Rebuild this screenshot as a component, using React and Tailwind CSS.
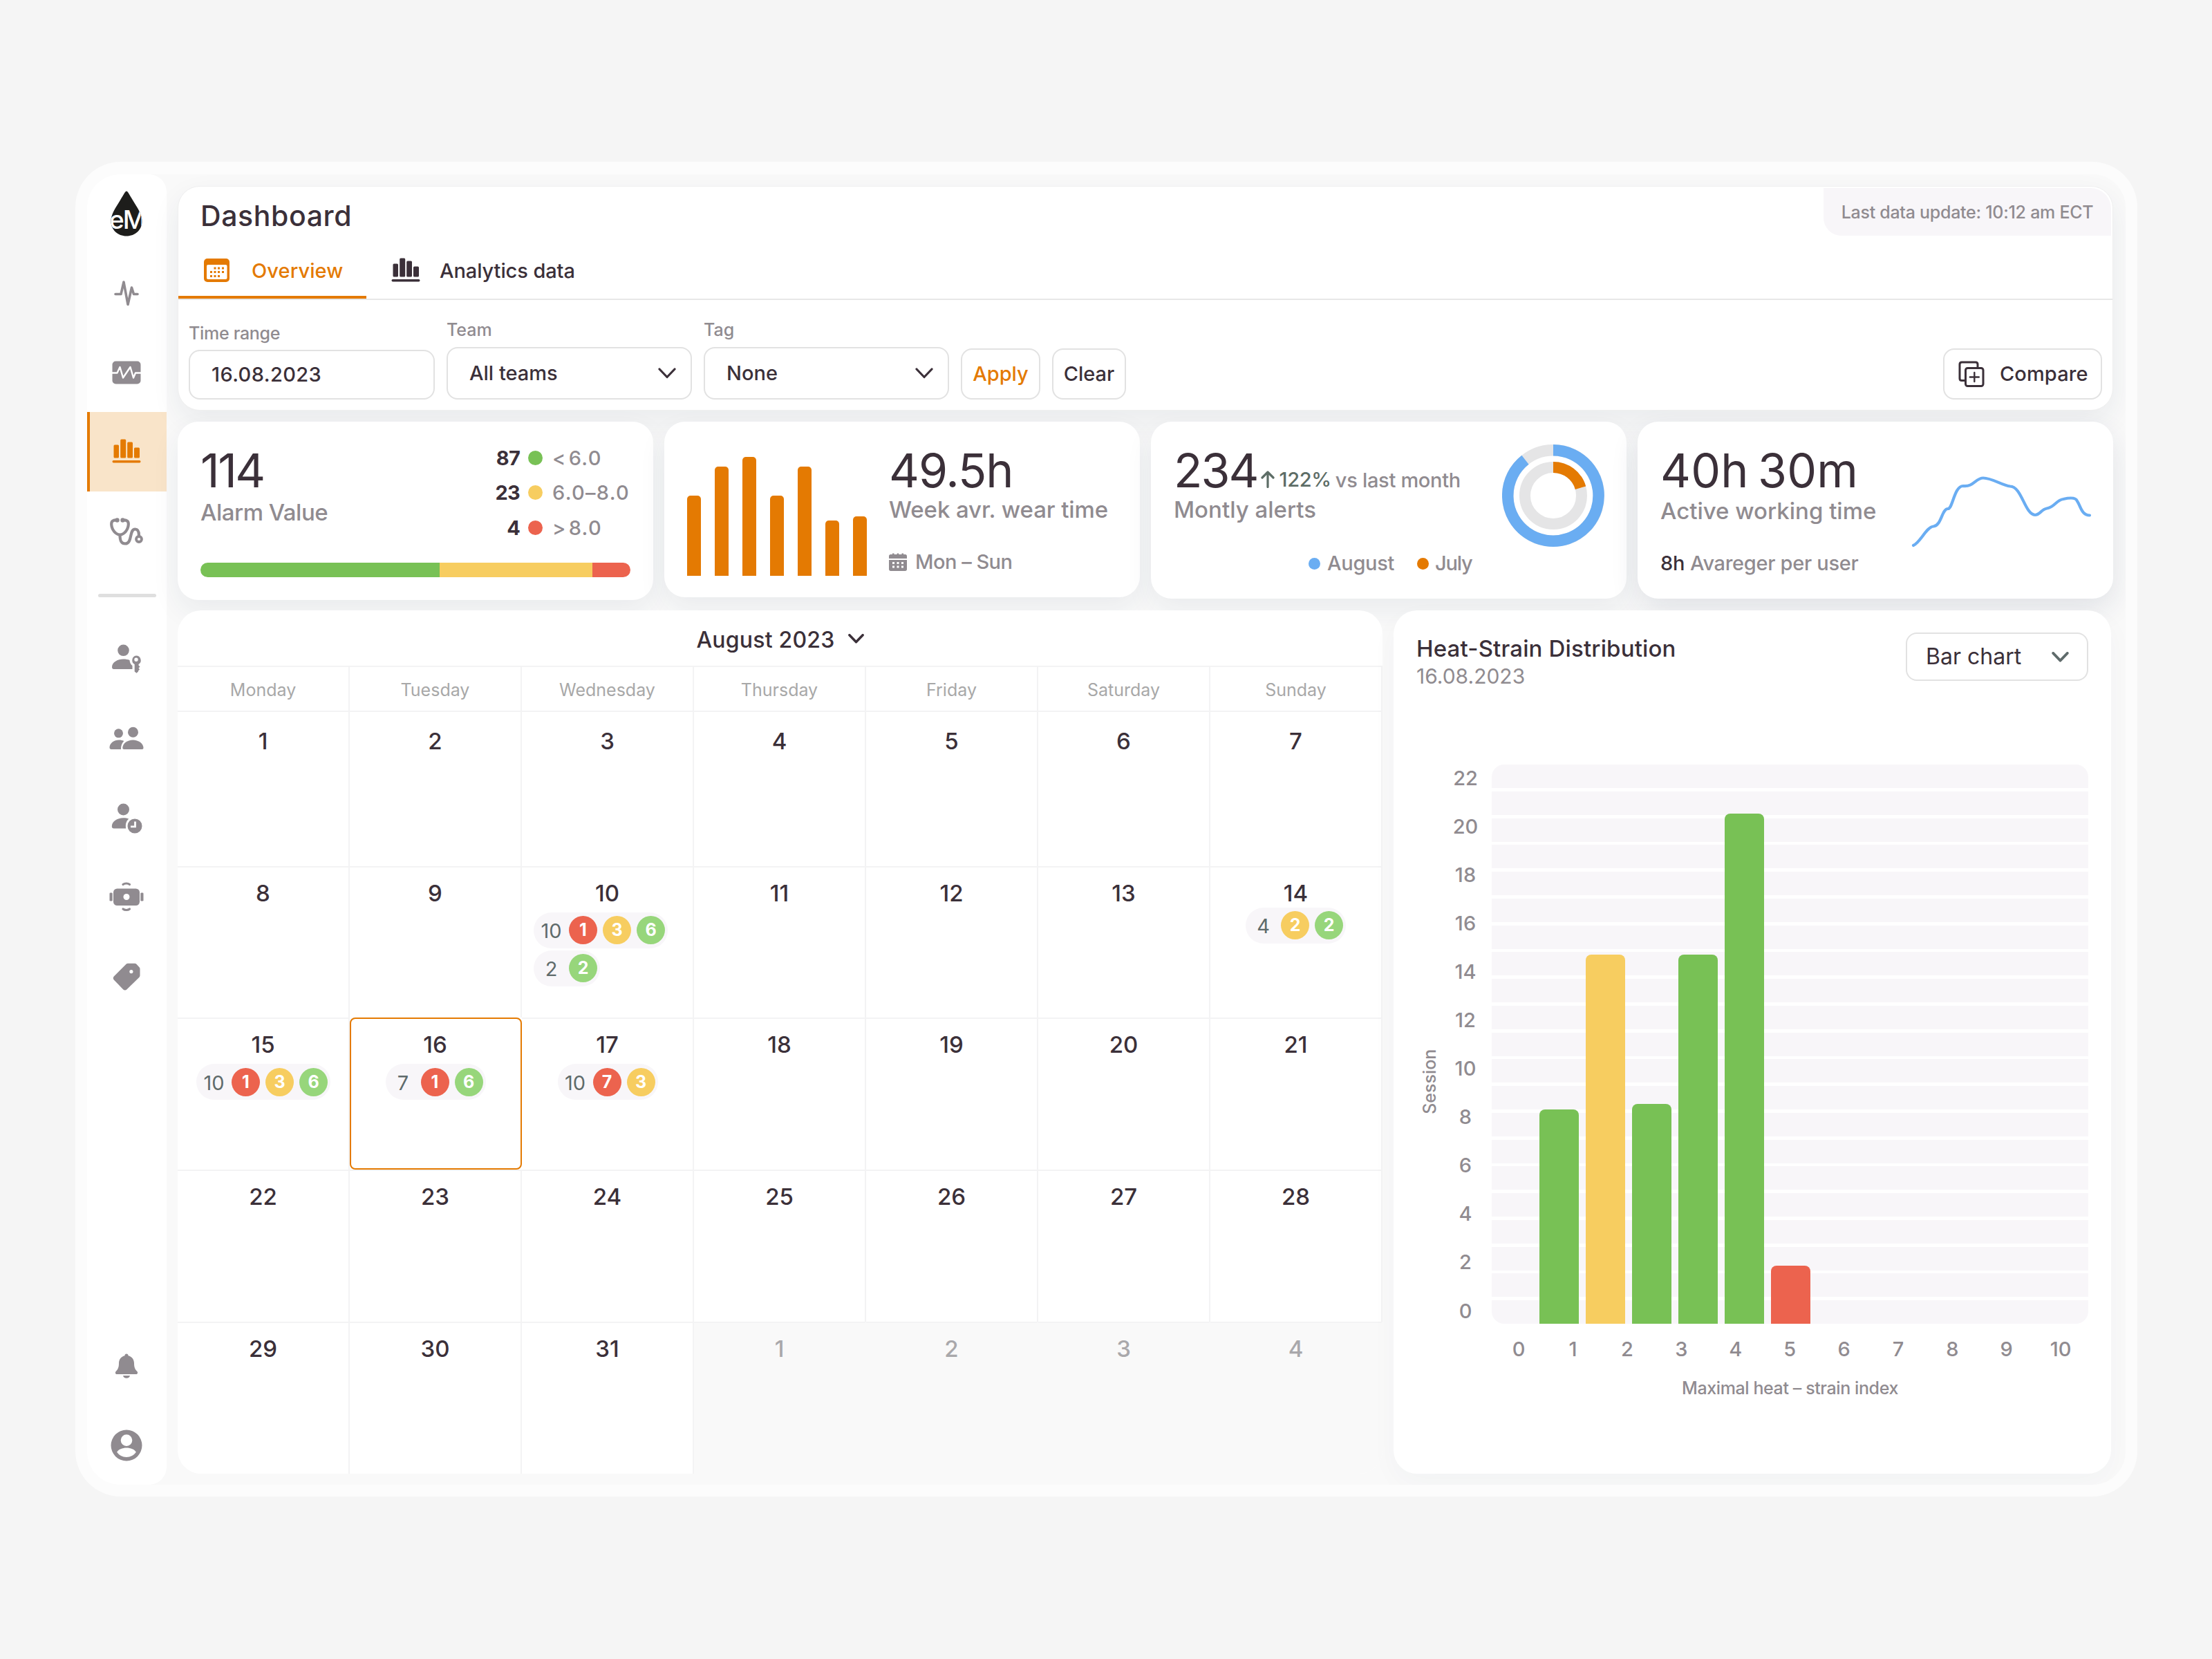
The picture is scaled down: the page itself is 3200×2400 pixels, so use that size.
import { useState } from "react";

const WEEKDAYS = [
  "Monday",
  "Tuesday",
  "Wednesday",
  "Thursday",
  "Friday",
  "Saturday",
  "Sunday",
];

const EVENTS = {
  10: {
    align: "left",
    rows: [
      { total: 10, red: 1, yellow: 3, green: 6 },
      { total: 2, green: 2 },
    ],
  },
  14: { align: "high", rows: [{ total: 4, yellow: 2, green: 2 }] },
  15: { rows: [{ total: 10, red: 1, yellow: 3, green: 6 }] },
  16: { rows: [{ total: 7, red: 1, green: 6 }] },
  17: { rows: [{ total: 10, red: 7, yellow: 3 }] },
};

const DAYS = Array.from({ length: 35 }, (_, i) => ({
  label: i < 31 ? i + 1 : i - 30,
  outside: i >= 31,
}));

const WEEK_BARS = [116, 158, 172, 116, 158, 80, 86];

const CHART_BARS = [
  { height: 310, color: "bg-[#78c155]" },
  { height: 534, color: "bg-[#f7cd60]" },
  { height: 318, color: "bg-[#78c155]" },
  { height: 534, color: "bg-[#78c155]" },
  { height: 738, color: "bg-[#78c155]" },
  { height: 84, color: "bg-[#ec634e]" },
];

function Chevron({ className, strokeWidth = 3.2 }) {
  return (
    <svg viewBox="0 0 26 16" fill="none" className={className}>
      <path
        d="M2 2 13 13.5 24 2"
        stroke="currentColor"
        strokeWidth={strokeWidth}
        strokeLinecap="round"
        strokeLinejoin="round"
      />
    </svg>
  );
}

function BarsIcon({ className }) {
  return (
    <svg viewBox="0 0 42 35" fill="currentColor" className={className}>
      <rect x="2.5" y="8.5" width="7.5" height="19" rx="1.5" />
      <rect x="12.2" y="0.5" width="8" height="27" rx="1.5" />
      <rect x="22.2" y="4.5" width="7.8" height="23" rx="1.5" />
      <rect x="32" y="12.5" width="8" height="15" rx="1.5" />
      <rect x="0.5" y="31" width="41" height="3.4" rx="1.7" />
    </svg>
  );
}

function Logo() {
  return (
    <svg viewBox="0 0 46 66" className="h-[66px] w-[46px]">
      <defs>
        <clipPath id="drop">
          <path d="M23 .5C24.500.5 27 5 32 13.500C39 25 45.500 34 45.500 44C45.500 56.500 35.500 65.500 23 65.500S.5 56.500.5 44C.5 34 7 25 14 13.500C19 5 21.500.5 23 .5Z" />
        </clipPath>
      </defs>
      <g clipPath="url(#drop)">
        <rect width="46" height="66" fill="#1d1d1b" />
        <text
          x="-2"
          y="55"
          fontFamily="Inter, sans-serif"
          fontSize="37"
          fontWeight="500"
          letterSpacing="-2"
          fill="#fff"
        >
          eM
        </text>
      </g>
    </svg>
  );
}

function PulseIcon() {
  return (
    <svg viewBox="0 0 36 38" fill="none" className="h-[38px] w-9">
      <path
        d="M2 20.500h8L14 3l6 32.500L25.500 11l3 9.500H34"
        stroke="currentColor"
        strokeWidth="3.6"
        strokeLinecap="round"
        strokeLinejoin="round"
      />
    </svg>
  );
}

function MonitorIcon() {
  return (
    <svg viewBox="0 0 42 34" className="h-[34px] w-[42px]">
      <rect x=".5" y=".5" width="41" height="33" rx="5" fill="currentColor" />
      <path
        d="M0 17.500h7.500L11.500 9l4.500 15.500L26.500 9 31 24.500l3-7h8"
        fill="none"
        stroke="#fff"
        strokeWidth="2.400"
        strokeLinejoin="round"
      />
    </svg>
  );
}

function StethoscopeIcon() {
  return (
    <svg viewBox="0 0 48 40" fill="none" className="h-10 w-12">
      <g stroke="currentColor" strokeWidth="4.200" strokeLinecap="round">
        <path d="M10.500 3.500C5 3.200 2 4.500 2.200 9.500 2.500 17 8 24.500 14.500 24.500S26.500 17 26.800 9.500C27 4.500 24 3.200 18.500 3.500" />
        <path d="M14.500 25c0 8 1.500 12.500 7.500 12.500 11 0 5.500-21 14.500-21 4.500 0 5.500 4 5.500 9" />
        <circle cx="42" cy="31" r="4" strokeWidth="3.800" />
      </g>
      <circle cx="10.500" cy="3.500" r="3.200" fill="currentColor" />
      <circle cx="18.500" cy="3.500" r="3.200" fill="currentColor" />
    </svg>
  );
}

function UserKeyIcon() {
  return (
    <svg viewBox="0 0 44 42" fill="currentColor" className="h-[42px] w-11">
      <circle cx="17.500" cy="8.800" r="8.300" />
      <path d="M1 33c0-7 8-11.500 16.500-11.500 3.500 0 6.500.5 9 1.500.3 3.500 1.500 6 4 8v5H3.500C2 36 1 35 1 33Z" />
      <path
        fillRule="evenodd"
        d="M36 16.500a6.700 6.700 0 0 1 3.500 12.400v1.600l2 2-2 2 1.500 2-2 2v1l-2.500 2.300-2.800-2.300V29a6.700 6.700 0 0 1 2.300-12.500Zm0 3a2.700 2.700 0 1 0 0 5.400 2.700 2.700 0 0 0 0-5.400Z"
      />
    </svg>
  );
}

function UsersIcon() {
  return (
    <svg viewBox="0 0 50 34" fill="currentColor" className="h-[34px] w-[50px]">
      <circle cx="13.500" cy="9.800" r="6.500" />
      <circle cx="34.500" cy="8.300" r="7.500" />
      <path d="M.5 30.500C.5 24 7 19.500 14 19.500c3 0 5.500.5 7.300 1.500-3 3-4.500 7-4.300 12H3C1.500 33 .5 32 .5 30.500Z" />
      <path d="M19.300 31c0-6.500 7-11.500 15-11.500s15.200 5 15.200 11.500c0 1.200-.8 2-2 2H21.300c-1.200 0-2-.8-2-2Z" />
    </svg>
  );
}

function UserClockIcon() {
  return (
    <svg viewBox="0 0 45 44" fill="none" className="mt-[2px] h-11 w-[45px]">
      <circle cx="17.500" cy="9" r="8.500" fill="currentColor" />
      <path
        d="M.8 33.500c0-7 7.700-12.200 16.700-12.200 3 0 5.500.4 7.700 1.300-3.700 3.600-5 8-4 13.900H3.800c-2 0-3-1.200-3-3Z"
        fill="currentColor"
      />
      <circle cx="34" cy="33" r="10.500" fill="currentColor" />
      <path d="M34.500 26.500v7.300H28" stroke="#fff" strokeWidth="2.800" />
    </svg>
  );
}

function HeadsetIcon() {
  return (
    <svg viewBox="0 0 50 43" fill="none" className="h-[43px] w-[50px]">
      <rect x="6" y="9.500" width="38" height="24.500" rx="5.500" fill="currentColor" />
      <circle cx="25" cy="21.500" r="4.500" fill="#fff" />
      <rect x=".5" y="15.500" width="4.200" height="12" rx="1.200" fill="currentColor" />
      <rect x="45.300" y="15.500" width="4.200" height="12" rx="1.200" fill="currentColor" />
      <path
        d="M20 3.500c2.500-2 7-2 9.500 0M20 39c2.500 2 7 2 9.500 0"
        stroke="currentColor"
        strokeWidth="3.200"
        strokeLinecap="round"
      />
    </svg>
  );
}

function TagIcon() {
  return (
    <svg viewBox="0 0 40 40" fill="currentColor" className="size-10">
      <path
        fillRule="evenodd"
        d="M22 .8h10c1 0 1.700.3 2.400 1l4.100 4.500c.7.700 1 1.400 1 2.400v9.600c0 1-.3 1.800-1 2.500L20.300 38.500c-1.500 1.400-3.500 1.400-5 0L1.800 24.500c-1.400-1.500-1.400-3.500 0-5L19.500 1.800c.7-.7 1.500-1 2.500-1Zm4.900 9.200a2.600 2.600 0 1 0 0 5.200 2.600 2.600 0 0 0 0-5.200Z"
      />
    </svg>
  );
}

function BellIcon() {
  return (
    <svg viewBox="0 0 34 36" fill="currentColor" className="h-9 w-[34px]">
      <path d="M17 .5c1.600 0 2.600 1.200 2.600 2.700C24.700 4.400 28 8.500 28 14c0 6.500 1.500 9 4.200 11.700 1.800 1.900.8 4.300-1.400 4.300H3.200C1 30 0 27.600 1.800 25.700 4.500 23 6 20.500 6 14 6 8.500 9.300 4.400 14.400 3.200 14.400 1.700 15.400.5 17 .5Z" />
      <path d="M12 32h10c-.4 2.300-2.300 3.700-5 3.700S12.400 34.300 12 32Z" />
    </svg>
  );
}

function AvatarIcon() {
  return (
    <svg viewBox="0 0 46 46" fill="currentColor" className="size-[46px]">
      <path
        fillRule="evenodd"
        d="M23 .5a22.500 22.500 0 1 0 0 45 22.500 22.500 0 0 0 0-45Zm0 6.800a8.300 8.300 0 1 1 0 16.600 8.300 8.300 0 0 1 0-16.600Zm0 32.700c-5.800 0-10.800-2.800-13.800-7.200 1.500-4 8-6.300 13.800-6.300s12.300 2.300 13.800 6.300C33.800 37.200 28.800 40 23 40Z"
      />
    </svg>
  );
}

function SidebarItem({ active, children }) {
  return (
    <button
      className={
        active
          ? "flex h-[115px] w-full items-center justify-center border-l-4 border-[#e47a02] bg-[#f9e4c9] pr-[5px] pb-[2px] text-[#e47a02]"
          : "flex h-[115px] w-full items-center justify-center pr-px text-[#908b90]"
      }
    >
      {children}
    </button>
  );
}

function Sidebar() {
  return (
    <nav className="flex h-full w-[115px] shrink-0 flex-col items-center rounded-[26px] bg-white">
      <div className="flex h-[114px] items-center pr-px">
        <Logo />
      </div>
      <SidebarItem>
        <PulseIcon />
      </SidebarItem>
      <SidebarItem>
        <MonitorIcon />
      </SidebarItem>
      <SidebarItem active>
        <BarsIcon className="h-[35px] w-[42px]" />
      </SidebarItem>
      <SidebarItem>
        <StethoscopeIcon />
      </SidebarItem>
      <div className="mt-[33px] mb-[31px] h-[5px] w-[84px] rounded-full bg-[#dfdfdf]" />
      <SidebarItem>
        <UserKeyIcon />
      </SidebarItem>
      <SidebarItem>
        <UsersIcon />
      </SidebarItem>
      <SidebarItem>
        <UserClockIcon />
      </SidebarItem>
      <SidebarItem>
        <HeadsetIcon />
      </SidebarItem>
      <SidebarItem>
        <TagIcon />
      </SidebarItem>
      <div className="mt-auto w-full">
        <SidebarItem>
          <BellIcon />
        </SidebarItem>
        <SidebarItem>
          <AvatarIcon />
        </SidebarItem>
      </div>
    </nav>
  );
}

function Header() {
  return (
    <header className="flex h-[325px] w-[2800px] flex-col rounded-[32px] border border-[#efefef] bg-white shadow-[0_16px_40px_rgba(30,50,80,0.07)]">
      <div className="flex h-[164px] shrink-0 justify-between border-b-2 border-[#e7e7e7]">
        <div className="flex flex-col">
          <h1 className="mt-[17px] ml-[32px] text-[41px] leading-[50px] font-medium tracking-[0.6px]">
            Dashboard
          </h1>
          <div className="mt-[17px] flex h-[80px]">
            <button className="flex w-[272px] items-center border-b-4 border-[#e47a02] pt-[2px] pl-[37px] text-[29px] font-medium text-[#e47a02]">
              <svg viewBox="0 0 38 34" className="mt-[-3px] h-[34px] w-[38px]">
                <rect width="37" height="34" rx="5" fill="currentColor" />
                <rect x="4" y="9" width="29.500" height="21" rx="2" fill="#fff" />
                <g fill="currentColor">
                  <path d="M14.500 12.500h3v3h-3zM20 12.500h3v3h-3zM26 12.500h3v3h-3z" />
                  <path d="M9 18h3v3H9zM14.500 18h3v3h-3zM20 18h3v3h-3zM26 18h3v3h-3z" />
                  <path d="M9 24h3v3H9zM14.500 24h3v3h-3zM20 24h3v3h-3z" />
                </g>
              </svg>
              <span className="ml-[31px] tracking-[0.1px]">Overview</span>
            </button>
            <button className="flex items-center border-b-4 border-transparent pt-[2px] pl-[36px] text-[29px] font-medium">
              <BarsIcon className="mt-[-4px] h-[35px] w-[42px]" />
              <span className="ml-[28px] tracking-[-0.1px]">
                Analytics data
              </span>
            </button>
          </div>
        </div>
        <div className="mt-[2px] mr-[2px] flex h-[69px] w-[416px] items-center justify-center rounded-tr-[30px] rounded-bl-[26px] bg-[#f8f6f9] pt-[2px] text-[25px] font-medium tracking-[-0.27px] text-[#908b90]">
          Last data update: 10:12 am ECT
        </div>
      </div>

      <div className="flex grow items-end gap-[17px] px-[15px] pb-[15px]">
        <label className="w-[356px] text-[25px] font-medium text-[#908b90]">
          <span className="block leading-[30px] tracking-[-0.3px]">
            Time range
          </span>
          <span className="mt-[9px] flex h-[72px] items-center rounded-2xl border-2 border-[#e2e2e2] px-[31px] text-[29px] tracking-[0.4px] text-[#3b3039]">
            16.08.2023
          </span>
        </label>
        <FilterSelect label="Team" value="All teams" />
        <FilterSelect label="Tag" value="None" />
        <button className="h-[74px] w-[115px] rounded-2xl border-2 border-[#e2e2e2] text-[29px] font-medium text-[#e47a02]">
          Apply
        </button>
        <button className="h-[74px] w-[107px] rounded-2xl border-2 border-[#e2e2e2] text-[29px] font-medium">
          Clear
        </button>
        <button className="ml-auto flex h-[74px] w-[230px] items-center rounded-2xl border-2 border-[#e2e2e2] pl-5 text-[29px] font-medium">
          <svg viewBox="0 0 38 38" fill="none" className="size-[38px]">
            <g
              stroke="currentColor"
              strokeWidth="3"
              strokeLinecap="round"
              strokeLinejoin="round"
            >
              <rect x="10.500" y="10.500" width="25.500" height="26" rx="3" />
              <path d="M28 9.500V5c0-2-1-3-3-3H5C3 2 2 3 2 5v20.500c0 2 1 3 3 3h4.500" />
              <path d="M23.300 17v13M16.800 23.500h13" strokeWidth="2.400" />
            </g>
          </svg>
          <span className="ml-[22px] tracking-[0.1px]">Compare</span>
        </button>
      </div>
    </header>
  );
}

function FilterSelect({ label, value }) {
  return (
    <label className="w-[355px] text-[25px] font-medium text-[#908b90]">
      <span className="block leading-[30px]">{label}</span>
      <span className="mt-[10px] flex h-[76px] items-center justify-between rounded-2xl border-2 border-[#e2e2e2] pr-[21px] pl-[31px] text-[29px] text-[#3b3039]">
        {value}
        <Chevron className="h-4 w-[26px]" />
      </span>
    </label>
  );
}

function LegendRow({ count, color, range }) {
  return (
    <div className="flex h-[50.500px] items-center text-[29px]">
      <span className="w-[50px] text-right font-bold tracking-[-0.8px]">
        {count}
      </span>
      <span className={`ml-3 size-[21px] rounded-full ${color}`} />
      <span className="ml-[14px] w-[113px] font-medium tracking-[1.3px] whitespace-nowrap text-[#908b90] [word-spacing:-6px]">
        {range}
      </span>
    </div>
  );
}

function AlarmCard() {
  return (
    <section className="h-[258px] w-[688px] rounded-[30px] bg-white px-[33px] pt-[27px] shadow-[0_16px_40px_rgba(30,50,80,0.07)]">
      <div className="flex justify-between">
        <div className="pt-[13px]">
          <div className="text-[68px] leading-[60px] tracking-[-2.5px]">114</div>
          <div className="mt-[9px] text-[33px] leading-[44px] font-medium tracking-[-0.5px] text-[#908b90]">
            Alarm Value
          </div>
        </div>
        <div>
          <LegendRow count={87} color="bg-[#78c155]" range="< 6.0" />
          <LegendRow count={23} color="bg-[#f7cd60]" range="6.0–8.0" />
          <LegendRow count={4} color="bg-[#ec634e]" range="> 8.0" />
        </div>
      </div>
      <div className="mt-[25.500px] flex h-[21px] overflow-hidden rounded-full">
        <div className="w-[346px] bg-[#78c155]" />
        <div className="w-[221px] bg-[#f7cd60]" />
        <div className="grow bg-[#ec634e]" />
      </div>
    </section>
  );
}

function WearTimeCard() {
  return (
    <section className="flex h-[254px] w-[688px] rounded-[30px] bg-white pl-[33px] shadow-[0_16px_40px_rgba(30,50,80,0.07)]">
      <div className="flex h-[223px] items-end gap-5">
        {WEEK_BARS.map((height, i) => (
          <div
            key={i}
            className="w-5 rounded-t-[5px] bg-[#e47a02]"
            style={{ height }}
          />
        ))}
      </div>
      <div className="ml-[32px] pt-[40px]">
        <div className="text-[68px] leading-[60px] tracking-[-1px]">49.5h</div>
        <div className="mt-[5px] text-[33px] leading-[44px] font-medium tracking-[-0.1px] whitespace-nowrap text-[#908b90]">
          Week avr. wear time
        </div>
        <div className="mt-[34px] flex items-center text-[29px] leading-[40px] font-medium text-[#908b90]">
          <svg viewBox="0 0 26 26" className="size-[26px]">
            <path
              d="M0 4.500C0 3 1 2 2.500 2H5V.5h2.500V2h4.200V.5h2.500V2h4.300V.5H21V2h2.500C25 2 26 3 26 4.500V8H0ZM0 10h26v13.500c0 1.500-1 2.500-2.500 2.500h-21C1 26 0 25 0 23.500Z"
              fill="currentColor"
            />
            <path
              d="M5 13h3v3H5zM11.500 13h3v3h-3zM18 13h3v3h-3zM5 18.500h3v3H5zM11.500 18.500h3v3h-3zM18 18.500h3v3h-3z"
              fill="#fff"
            />
          </svg>
          <span className="ml-[12px] tracking-[-0.5px]">Mon – Sun</span>
        </div>
      </div>
    </section>
  );
}

function AlertsCard() {
  return (
    <section className="flex h-[256px] w-[688px] justify-between rounded-[30px] bg-white pr-[32px] pl-[33px] shadow-[0_16px_40px_rgba(30,50,80,0.07)]">
      <div className="pt-[40px]">
        <div className="flex h-[60px] items-center">
          <span className="text-[68px] leading-[60px] tracking-[-2px]">
            234
          </span>
          <svg
            viewBox="0 0 20 25"
            fill="none"
            className="mt-[27px] ml-[5px] h-[25px] w-5"
          >
            <path
              d="M10 23.500V2M2 10l8-8 8 8"
              stroke="#5d6d66"
              strokeWidth="3.2"
              strokeLinecap="round"
              strokeLinejoin="round"
            />
          </svg>
          <span className="mt-[27px] ml-[6px] text-[29px] leading-[30px] font-medium tracking-[-0.3px] text-[#5d6d66]">
            122%
          </span>
          <span className="mt-[29px] ml-[6px] text-[29px] leading-[30px] font-medium tracking-[-0.3px] text-[#908b90]">
            vs last month
          </span>
        </div>
        <div className="mt-[5px] text-[33px] leading-[44px] font-medium text-[#908b90]">
          Montly alerts
        </div>
        <div className="mt-[36px] ml-[195px] flex items-center text-[29px] leading-[40px] font-medium text-[#908b90]">
          <span className="mr-[10px] size-[17px] rounded-full bg-[#6aadf2]" />
          <span className="w-[97px] tracking-[-0.3px]">August</span>
          <span className="mr-[9px] ml-[33px] size-[17px] rounded-full bg-[#e47a02]" />
          <span className="tracking-[-1.2px]">July</span>
        </div>
      </div>
      <svg viewBox="0 0 148 148" fill="none" className="mt-[33px] size-[148px]">
        <circle cx="74" cy="74" r="65.700" stroke="#e5e5e6" strokeWidth="16.500" />
        <circle cx="74" cy="74" r="41" stroke="#e5e5e6" strokeWidth="16" />
        <path
          d="M74 8.300A65.700 65.700 0 1 1 33.500 22.200"
          stroke="#6aadf2"
          strokeWidth="16.500"
        />
        <path
          d="M74 33A41 41 0 0 1 113.500 62.700"
          stroke="#e47a02"
          strokeWidth="16"
        />
      </svg>
    </section>
  );
}

function WorkingTimeCard() {
  return (
    <section className="flex h-[256px] w-[688px] rounded-[30px] bg-white pl-[33px] shadow-[0_16px_40px_rgba(30,50,80,0.11)]">
      <div className="w-[363px] pt-[40px]">
        <div className="text-[68px] leading-[60px] tracking-[0.2px] whitespace-nowrap [word-spacing:-6px]">
          40h 30m
        </div>
        <div className="mt-[7px] text-[33px] leading-[44px] font-medium whitespace-nowrap text-[#908b90]">
          Active working time
        </div>
        <div className="mt-[34px] text-[29px] leading-[40px] font-medium tracking-[-0.3px] text-[#908b90]">
          <span className="mr-[8px] text-[#3b3039]">8h</span>
          Avareger per user
        </div>
      </div>
      <svg
        viewBox="0 0 262 104"
        fill="none"
        className="mt-[78px] h-[104px] w-[262px]"
      >
        <path
          d="M3 101C13 97 22 74 32 73.500C44 72 44 48 53 48C60 48 62 15 75 15C90 17 93 3.500 104 3.500C117 3.500 131 14 143 15.500C160 16 164 56 179 57C186 57 188 49 196 47.500C207 46 210 35 220 34C229 32 238 31 240 37C245 44 246 57 258 57.500"
          stroke="#6aadf2"
          strokeWidth="4.200"
          strokeLinecap="round"
        />
      </svg>
    </section>
  );
}

function Dot({ value, color }) {
  if (!value) return null;
  return (
    <span
      className={`flex size-[41px] items-center justify-center rounded-full text-[25px] font-bold text-white ${color}`}
    >
      {value}
    </span>
  );
}

function EventPill({ total, red, yellow, green }) {
  return (
    <div className="flex h-[52px] items-center gap-2 rounded-full bg-[#f8f6f9] pr-1">
      <span className="-mr-2 w-[51px] pt-[2px] text-center text-[29px] text-[#5f6b6b]">
        {total}
      </span>
      <Dot value={red} color="bg-[#ec634e]" />
      <Dot value={yellow} color="bg-[#f7cd60]" />
      <Dot value={green} color="bg-[#97d67b]" />
    </div>
  );
}

function DayCell({ day, index, selected, onSelect }) {
  const events = day.outside ? null : EVENTS[day.label];
  const firstRow = index < 7;
  let pillWrap = "mt-[8px] flex flex-col items-center gap-[3px] pl-px";
  if (events?.align === "left") {
    pillWrap = "mt-[8px] flex flex-col items-start gap-[3px] pl-[17px]";
  } else if (events?.align === "high") {
    pillWrap = "mt-px flex flex-col items-center gap-[3px]";
  }

  return (
    <div
      onClick={onSelect}
      className={`border-t-2 border-r-2 ${
        firstRow ? "pt-[22px]" : "pt-[17px]"
      } ${
        day.outside
          ? "border-t-[#f3f3f4] border-r-[#f9f9f9] bg-[#f9f9f9] text-[#a9a8ab]"
          : "border-[#f3f3f4]"
      } ${
        selected ? "rounded-lg outline-2 -outline-offset-2 outline-[#e47a02]" : ""
      }`}
    >
      <div className="text-center text-[33px] leading-[40px] font-medium">
        {day.label}
      </div>
      {events && (
        <div className={pillWrap}>
          {events.rows.map((row, i) => (
            <EventPill key={i} {...row} />
          ))}
        </div>
      )}
    </div>
  );
}

function Calendar() {
  const [selected, setSelected] = useState(15);

  return (
    <section className="flex h-[1249px] w-[1743px] flex-col overflow-hidden rounded-[34px] bg-white">
      <div className="flex h-[80px] items-center justify-center gap-[19px] pt-[5px] text-[32px] font-medium tracking-[0.2px]">
        August 2023
        <Chevron className="mt-[-4px] h-[14px] w-[23px]" strokeWidth={4} />
      </div>
      <div className="grid h-[65px] grid-cols-7 border-t-2 border-[#f3f3f4]">
        {WEEKDAYS.map((name) => (
          <div
            key={name}
            className="flex items-center justify-center border-r-2 border-[#f3f3f4] pt-[4px] text-[25px] text-[#a8a8a8]"
          >
            {name}
          </div>
        ))}
      </div>
      <div className="grid grow grid-cols-7 grid-rows-[224.500px_repeat(4,1fr)]">
        {DAYS.map((day, i) => (
          <DayCell
            key={i}
            day={day}
            index={i}
            selected={i === selected}
            onSelect={() => setSelected(i)}
          />
        ))}
      </div>
    </section>
  );
}

function HeatStrainCard() {
  return (
    <section className="h-[1249px] w-[1038px] rounded-[34px] bg-white pr-[33px] pl-[33px] shadow-[0_14px_40px_rgba(30,50,80,0.03)]">
      <div className="flex justify-between pt-[32px]">
        <div className="pt-[3px]">
          <h2 className="text-[33px] leading-[40px] font-medium tracking-[0.15px]">
            Heat-Strain Distribution
          </h2>
          <div className="text-[30px] leading-[40px] text-[#908b90]">
            16.08.2023
          </div>
        </div>
        <button className="flex h-[70px] w-[264px] items-center justify-between rounded-2xl border-2 border-[#e2e2e2] pr-[26px] pl-[27px] text-[32px]">
          Bar chart
          <Chevron className="h-[15px] w-[25px] text-[#5f6b6b]" strokeWidth={4} />
        </button>
      </div>

      <div className="mt-[108px] flex h-[809px]">
        <div className="flex w-10 items-center justify-center pt-[109px]">
          <span className="-rotate-90 text-[25px] font-medium whitespace-nowrap text-[#908b90]">
            Session
          </span>
        </div>
        <div className="mt-[-15px] flex w-[62px] flex-col text-center text-[29px] font-medium text-[#908b90]">
          {Array.from({ length: 12 }, (_, i) => (
            <span key={i} className="h-[70.05px] shrink-0 leading-[70px]">
              {22 - i * 2}
            </span>
          ))}
        </div>
        <div className="ml-[7px] grid h-[809px] w-[863px]">
          <div className="col-start-1 row-start-1 flex flex-col gap-[4.600px] overflow-hidden rounded-[18px]">
            {Array.from({ length: 21 }, (_, i) => (
              <div key={i} className="flex-1 bg-[#f8f6f9]" />
            ))}
          </div>
          <div className="col-start-1 row-start-1 flex items-end gap-[10px] pl-[69px]">
            {CHART_BARS.map((bar, i) => (
              <div
                key={i}
                className={`w-[57px] rounded-t-lg ${bar.color}`}
                style={{ height: bar.height }}
              />
            ))}
          </div>
        </div>
      </div>

      <div className="mt-[17px] ml-[109px] flex px-0 text-center text-[29px] leading-[40px] font-medium text-[#908b90]">
        {Array.from({ length: 11 }, (_, i) => (
          <span key={i} className="w-[78.400px]">
            {i}
          </span>
        ))}
      </div>
      <div className="mt-[20px] ml-[109px] text-center text-[25px] leading-[32px] font-medium tracking-[-0.4px] text-[#908b90]">
        Maximal heat – strain index
      </div>
    </section>
  );
}

export default function App() {
  return (
    <div className="flex h-[2400px] w-[3200px] bg-[#f5f5f5] pt-[234px] pl-[109px] font-[Inter,sans-serif] text-[#3b3039]">
      <div className="h-[1931px] w-[2983px] rounded-[66px] bg-[#fcfcfc] p-[17px] pt-[18px]">
        <div className="flex h-[1896px] w-full overflow-hidden rounded-[48px] bg-[#f9f9f9]">
          <Sidebar />
          <main className="pt-[17px] pl-4">
            <Header />
            <div className="mt-[16px] flex h-[258px] items-start gap-4">
              <AlarmCard />
              <WearTimeCard />
              <AlertsCard />
              <WorkingTimeCard />
            </div>
            <div className="mt-[15px] flex gap-[16px]">
              <Calendar />
              <HeatStrainCard />
            </div>
          </main>
        </div>
      </div>
    </div>
  );
}
